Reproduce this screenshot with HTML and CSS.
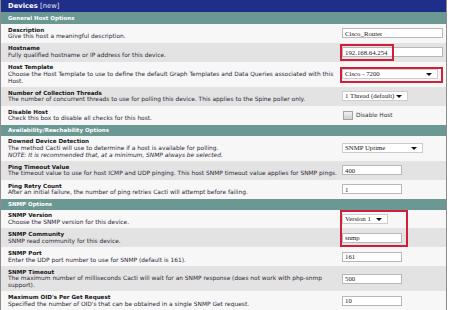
FILE: index.html
```html
<!DOCTYPE html>
<html lang="en">
<head>
    <meta charset="UTF-8">
    <meta name="viewport" content="width=device-width, initial-scale=1.0">
    <title>Devices [new]</title>
    <link rel="stylesheet" href="styles.css">
</head>
<body>

    <div class="panel">
        <div class="title">Devices <span class="new">[new]</span></div>

        <!-- General Host Options -->
        <div class="section first">General Host Options</div>

        <div class="row">
            <div class="info">
                <b>Description</b>
                <p>Give this host a meaningful description.</p>
            </div>
            <div class="field"><input class="text long" type="text" value="Cisco_Router"></div>
        </div>

        <div class="row alt">
            <div class="info">
                <b>Hostname</b>
                <p>Fully qualified hostname or IP address for this device.</p>
            </div>
            <div class="field">
                <input class="text long" type="text" value="192.168.64.254">
                <span class="mark mark-host"></span>
            </div>
        </div>

        <div class="row">
            <div class="info">
                <b>Host Template</b>
                <p>Choose the Host Template to use to define the default Graph Templates and Data Queries associated with this<br>Host.</p>
            </div>
            <div class="field">
                <span class="drop tmpl"><select><option>Cisco - 7200</option></select></span>
                <span class="mark mark-tmpl"></span>
            </div>
        </div>

        <div class="row alt">
            <div class="info">
                <b>Number of Collection Threads</b>
                <p>The number of concurrent threads to use for polling this device. This applies to the Spine poller only.</p>
            </div>
            <div class="field">
                <span class="drop threads"><select><option>1 Thread (default)</option></select></span>
            </div>
        </div>

        <div class="row">
            <div class="info">
                <b>Disable Host</b>
                <p>Check this box to disable all checks for this host.</p>
            </div>
            <div class="field">
                <label class="check"><input type="checkbox"> Disable Host</label>
            </div>
        </div>

        <!-- Availability -->
        <div class="section">Availability/Reachability Options</div>

        <div class="row">
            <div class="info">
                <b>Downed Device Detection</b>
                <p>The method Cacti will use to determine if a host is available for polling.</p>
                <p class="note">NOTE: It is recommended that, at a minimum, SNMP always be selected.</p>
            </div>
            <div class="field">
                <span class="drop uptime"><select><option>SNMP Uptime</option></select></span>
            </div>
        </div>

        <div class="row alt">
            <div class="info">
                <b>Ping Timeout Value</b>
                <p>The timeout value to use for host ICMP and UDP pinging. This host SNMP timeout value applies for SNMP pings.</p>
            </div>
            <div class="field"><input class="text short" type="text" value="400"></div>
        </div>

        <div class="row">
            <div class="info">
                <b>Ping Retry Count</b>
                <p>After an initial failure, the number of ping retries Cacti will attempt before failing.</p>
            </div>
            <div class="field"><input class="text short" type="text" value="1"></div>
        </div>

        <!-- SNMP -->
        <div class="section">SNMP Options</div>

        <div class="row">
            <div class="info">
                <b>SNMP Version</b>
                <p>Choose the SNMP version for this device.</p>
            </div>
            <div class="field">
                <span class="drop version"><select><option>Version 1</option></select></span>
                <span class="mark mark-snmp"></span>
            </div>
        </div>

        <div class="row alt">
            <div class="info">
                <b>SNMP Community</b>
                <p>SNMP read community for this device.</p>
            </div>
            <div class="field"><input class="text short" type="text" value="snmp"></div>
        </div>

        <div class="row">
            <div class="info">
                <b>SNMP Port</b>
                <p>Enter the UDP port number to use for SNMP (default is 161).</p>
            </div>
            <div class="field"><input class="text short" type="text" value="161"></div>
        </div>

        <div class="row alt">
            <div class="info">
                <b>SNMP Timeout</b>
                <p>The maximum number of milliseconds Cacti will wait for an SNMP response (does not work with php-snmp<br>support).</p>
            </div>
            <div class="field"><input class="text short" type="text" value="500"></div>
        </div>

        <div class="row">
            <div class="info">
                <b>Maximum OID's Per Get Request</b>
                <p>Specified the number of OID's that can be obtained in a single SNMP Get request.</p>
            </div>
            <div class="field"><input class="text short" type="text" value="10"></div>
        </div>
    </div>

</body>
</html>
```

FILE: styles.css
```css
* {
    margin: 0;
    padding: 0;
    box-sizing: border-box;
}

body {
    font-family: 'DejaVu Sans', Verdana, sans-serif;
    background-color: #ffffff;
    color: #222;
}

/* Panel */
.panel {
    width: 447px;
    border: 1px solid #8d8d8d;
    border-top: none;
}

.title {
    height: 12px;
    line-height: 12px;
    padding-left: 7px;
    background-color: #1f2e88;
    color: #fff;
    font-size: 6.8px;
    font-weight: bold;
}

.title .new {
    font-weight: normal;
    color: #e4e6f2;
}

.section {
    height: 11px;
    line-height: 11px;
    padding-left: 7px;
    background-color: #6b9893;
    color: #fff;
    font-size: 5.5px;
    font-weight: bold;
}

.section.first {
    height: 12px;
    line-height: 12px;
}

/* Form rows */
.row {
    display: grid;
    grid-template-columns: 1fr 104px;
    background-color: #f7f7f7;
}

.row.alt {
    background-color: #e3e3e3;
}

.info {
    padding: 2.7px 0 2.7px 7px;
    font-size: 5.9px;
    line-height: 6.7px;
    white-space: nowrap;
}

.info b {
    display: block;
    font-size: 5.6px;
    color: #151515;
}

.info p {
    color: #2e2838;
}

.info .note {
    font-style: italic;
}

.field {
    position: relative;
    display: flex;
    align-items: center;
    font-size: 6.8px;
}

/* Inputs */
.text {
    display: block;
    height: 10px;
    padding: 0 2px;
    border: 1px solid #b8b8b8;
    background-color: #fff;
    font-family: 'Liberation Serif', serif;
    font-size: 6.8px;
    color: #222;
    outline: none;
}

.text.long {
    width: 101px;
}

.text.short {
    width: 60px;
}

.drop {
    position: relative;
    display: block;
    height: 10px;
}

.drop select {
    appearance: none;
    -webkit-appearance: none;
    display: block;
    width: 100%;
    height: 10px;
    padding: 0 2px;
    border: 1px solid #cdcdcd;
    border-radius: 0;
    background-color: #fff;
    font-family: 'Liberation Serif', serif;
    font-size: 6.8px;
    line-height: 8px;
    color: #222;
}

.drop::after {
    content: "";
    position: absolute;
    right: 6px;
    top: 3.5px;
    border-left: 3px solid transparent;
    border-right: 3px solid transparent;
    border-top: 3.5px solid #111;
}

.drop.tmpl { width: 96px; }
.drop.threads { width: 66px; }
.drop.uptime { width: 81px; }
.drop.version { width: 46px; }

.check {
    display: flex;
    align-items: center;
    gap: 3px;
    font-size: 5.8px;
    color: #333;
}

.check input {
    appearance: none;
    -webkit-appearance: none;
    width: 10px;
    height: 9px;
    margin-left: 1px;
    border: 1px solid #a3a3a3;
    background: linear-gradient(#f0f0f0, #cfcfcf);
}

/* Red highlight marks */
.mark {
    position: absolute;
    left: -2px;
    border: 2px solid #d11f3a;
    pointer-events: none;
}

.mark-host {
    top: 1px;
    width: 54px;
    height: 17px;
}

.mark-tmpl {
    top: 5px;
    width: 103px;
    height: 16px;
}

.mark-snmp {
    top: 0;
    width: 68px;
    height: 37px;
}
```
